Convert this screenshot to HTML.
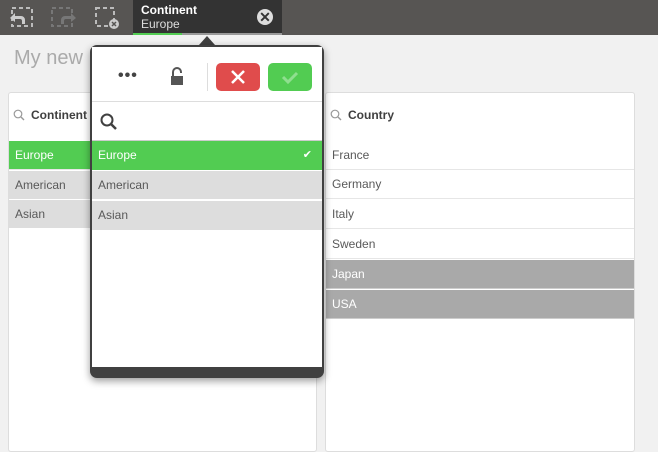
<!DOCTYPE html>
<html><head><style>
*{margin:0;padding:0;box-sizing:border-box}
body{width:658px;height:443px;overflow:hidden;background:#f1f1f1;font-family:"Liberation Sans",sans-serif;position:relative;font-size:12px;color:#595959}
.a{position:absolute}
.row{position:absolute;left:0;right:0;height:29px;line-height:29px;padding-left:6px;border-bottom:1px solid #e6e6e6}
</style></head><body>
<div class="a" style="left:0;top:0;width:658px;height:35px;background:#575553"></div>
<svg class="a" style="left:6px;top:6px" width="28" height="24" viewBox="0 0 28 24"><rect x="6" y="2" width="20" height="18" fill="none" stroke="#bbb" stroke-width="2" stroke-dasharray="4 3"/><path d="M4 12l5-5v3h6a4 4 0 0 1 4 4v4h-3v-3a2 2 0 0 0-2-2H9v3z" fill="#ccc"/></svg>
<svg class="a" style="left:50px;top:6px" width="28" height="24" viewBox="0 0 28 24"><rect x="2" y="2" width="20" height="18" fill="none" stroke="#777" stroke-width="2" stroke-dasharray="4 3"/><path d="M26 12l-5-5v3h-6a4 4 0 0 0-4 4v4h3v-3a2 2 0 0 1 2-2h5v3z" fill="#777"/></svg>
<svg class="a" style="left:94px;top:6px" width="28" height="24" viewBox="0 0 28 24"><rect x="2" y="2" width="18" height="18" fill="none" stroke="#bbb" stroke-width="2" stroke-dasharray="4 3"/><circle cx="20" cy="18" r="5" fill="#ccc"/><path d="M18 16l4 4M22 16l-4 4" stroke="#575553" stroke-width="1.5"/></svg>
<div class="a" style="left:133px;top:0;width:149px;height:35px;background:#333"></div>
<div class="a" style="left:133px;top:33px;width:149px;height:2px;background:#999"></div>
<div class="a" style="left:133px;top:33px;width:49px;height:2px;background:#52cc52"></div>
<div class="a" style="left:141px;top:3px;color:#fff;font-weight:bold;font-size:12px">Continent</div>
<div class="a" style="left:141px;top:17px;color:#ddd;font-size:12px">Europe</div>
<div class="a" style="left:257px;top:9px;width:16px;height:16px;border-radius:50%;background:#ddd;color:#333;font-size:14px;line-height:16px;text-align:center;font-weight:bold">✕</div>
<div class="a" style="left:14px;top:47px;font-size:20px;color:#aaa">My new</div>

<div class="a" style="left:8px;top:92px;width:309px;height:360px;background:#fff;border:1px solid #ddd;border-radius:3px">
<svg class="a" style="left:4px;top:16px" width="12" height="12" viewBox="0 0 12 12"><circle cx="5" cy="5" r="3.8" fill="none" stroke="#999" stroke-width="1.2"/><path d="M8 8l3 3" stroke="#999" stroke-width="1.4"/></svg>
<div class="a" style="left:22px;top:15px;font-weight:bold;color:#404040">Continent</div>
<div class="row" style="top:48px;background:#52cc52;color:#fff">Europe</div>
<div class="row" style="top:78px;background:#ddd;border-color:#fff">American</div>
<div class="row" style="top:107px;background:#ddd;border-color:#fff">Asian</div>
</div>

<div class="a" style="left:325px;top:92px;width:310px;height:360px;background:#fff;border:1px solid #ddd;border-radius:3px">
<svg class="a" style="left:4px;top:16px" width="12" height="12" viewBox="0 0 12 12"><circle cx="5" cy="5" r="3.8" fill="none" stroke="#999" stroke-width="1.2"/><path d="M8 8l3 3" stroke="#999" stroke-width="1.4"/></svg>
<div class="a" style="left:22px;top:15px;font-weight:bold;color:#404040">Country</div>
<div class="row" style="top:48px">France</div>
<div class="row" style="top:77px">Germany</div>
<div class="row" style="top:107px">Italy</div>
<div class="row" style="top:137px">Sweden</div>
<div class="row" style="top:167px;background:#a9a9a9;color:#fff;border-color:#ccc">Japan</div>
<div class="row" style="top:197px;background:#a9a9a9;color:#fff;border-color:#ccc">USA</div>
</div>

<div class="a" style="left:199px;top:36px;width:0;height:0;border-left:8px solid transparent;border-right:8px solid transparent;border-bottom:9px solid #404040"></div>
<div class="a" style="left:90px;top:45px;width:234px;height:333px;background:#404040;border-radius:7px;box-shadow:0 3px 8px rgba(0,0,0,.4)">
<div class="a" style="left:2px;top:2px;width:230px;height:320px;background:#fff;overflow:hidden">
<div class="a" style="left:26px;top:20px;font-size:16px;color:#444;font-weight:bold;letter-spacing:1px">•••</div>
<svg class="a" style="left:78px;top:20px" width="14" height="20" viewBox="0 0 14 20"><path d="M3 9V5a4 4 0 0 1 8 0v1" fill="none" stroke="#555" stroke-width="2"/><rect x="1" y="9" width="12" height="9" fill="#555"/></svg>
<div class="a" style="left:115px;top:16px;width:1px;height:28px;background:#ddd"></div>
<div class="a" style="left:124px;top:16px;width:44px;height:28px;background:#e04c4c;border-radius:5px"><svg width="44" height="28"><path d="M16 8l12 12M28 8L16 20" stroke="#fff" stroke-width="2.5"/></svg></div>
<div class="a" style="left:176px;top:16px;width:44px;height:28px;background:#52cc52;border-radius:5px"><svg width="44" height="28"><path d="M15 14l5 5 9-9" stroke="#8fdf8f" stroke-width="3" fill="none"/></svg></div>
<div class="a" style="left:0;top:54px;width:230px;height:1px;background:#ddd"></div>
<svg class="a" style="left:8px;top:66px" width="18" height="18" viewBox="0 0 18 18"><circle cx="7" cy="7" r="5.5" fill="none" stroke="#404040" stroke-width="2"/><path d="M11 11l5 5" stroke="#404040" stroke-width="2.5"/></svg>
<div class="a" style="left:0;top:93px;width:230px;height:1px;background:#ccc"></div>
<div class="row" style="top:94px;height:29px;background:#52cc52;color:#fff;border:0">Europe<span style="position:absolute;right:10px;font-size:11px">✔</span></div>
<div class="row" style="top:124px;background:#ddd;border-color:#fff">American</div>
<div class="row" style="top:154px;background:#ddd;border:0">Asian</div>
</div></div>
</body></html>
